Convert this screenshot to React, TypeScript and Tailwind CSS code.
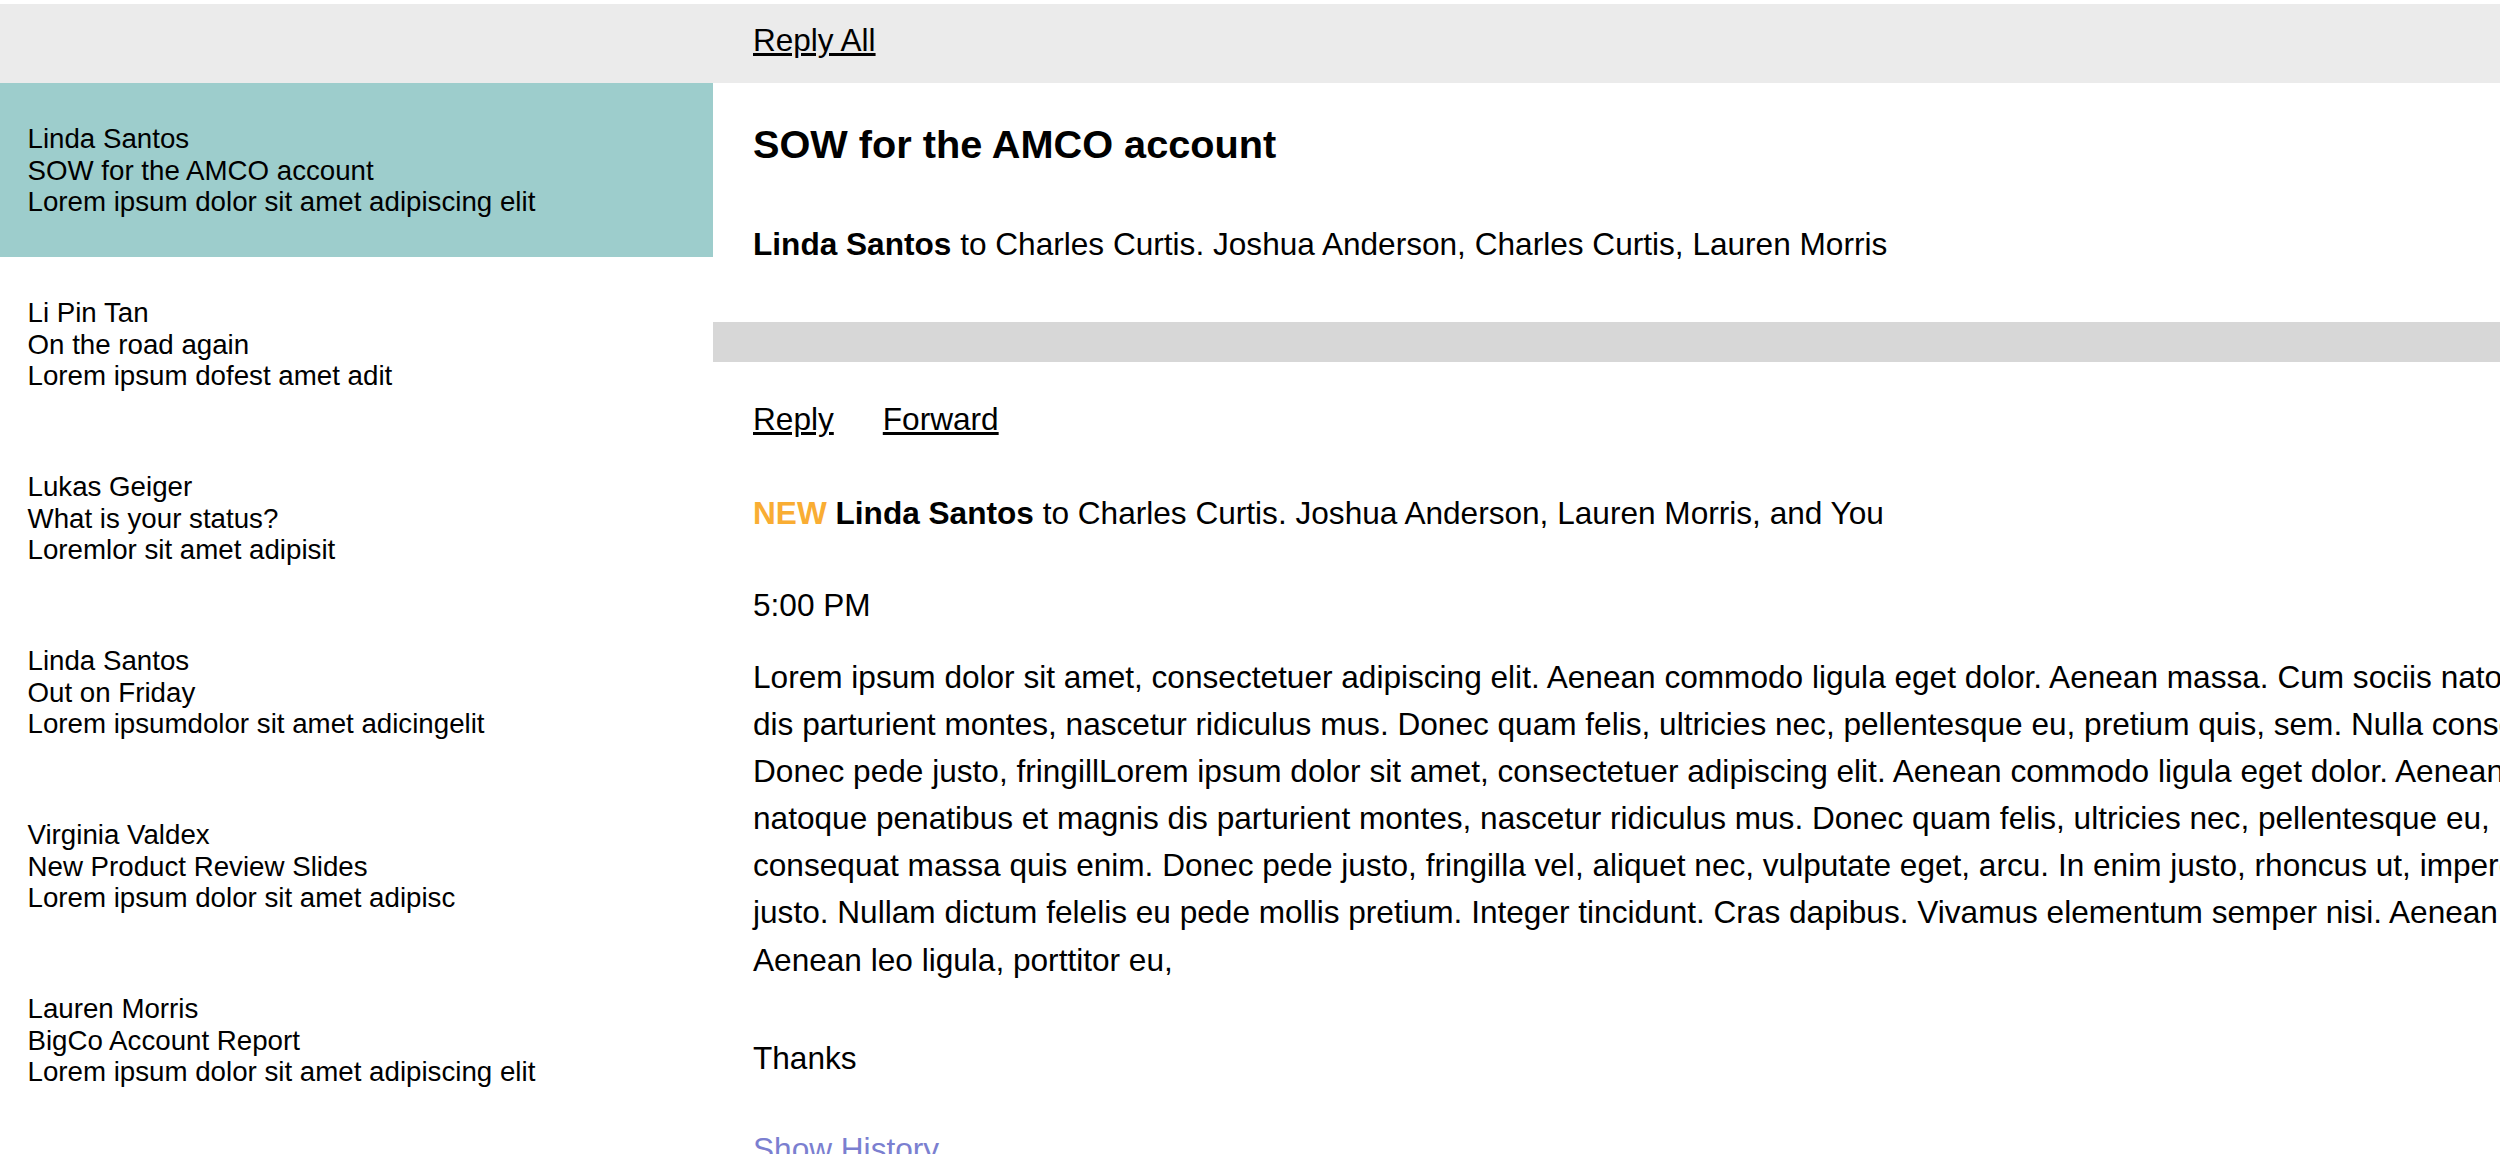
import React from "react";

const threads = [
  { from: "Linda Santos", subject: "SOW for the AMCO account", preview: "Lorem ipsum dolor sit amet adipiscing elit", active: true },
  { from: "Li Pin Tan", subject: "On the road again", preview: "Lorem ipsum dofest amet adit" },
  { from: "Lukas Geiger", subject: "What is your status?", preview: "Loremlor sit amet adipisit" },
  { from: "Linda Santos", subject: "Out on Friday", preview: "Lorem ipsumdolor sit amet adicingelit" },
  { from: "Virginia Valdex", subject: "New Product Review Slides", preview: "Lorem ipsum dolor sit amet adipisc" },
  { from: "Lauren Morris", subject: "BigCo Account Report", preview: "Lorem ipsum dolor sit amet adipiscing elit" },
];

const bodyLines = [
  "Lorem ipsum dolor sit amet, consectetuer adipiscing elit. Aenean commodo ligula eget dolor. Aenean massa. Cum sociis natoque penatibus et magnis",
  "dis parturient montes, nascetur ridiculus mus. Donec quam felis, ultricies nec, pellentesque eu, pretium quis, sem. Nulla consequat massa quis enim.",
  "Donec pede justo, fringillLorem ipsum dolor sit amet, consectetuer adipiscing elit. Aenean commodo ligula eget dolor. Aenean massa. Cum sociis",
  "natoque penatibus et magnis dis parturient montes, nascetur ridiculus mus. Donec quam felis, ultricies nec, pellentesque eu, pretium quis, sem. Nulla",
  "consequat massa quis enim. Donec pede justo, fringilla vel, aliquet nec, vulputate eget, arcu. In enim justo, rhoncus ut, imperdiet a, venenatis vitae,",
  "justo. Nullam dictum felelis eu pede mollis pretium. Integer tincidunt. Cras dapibus. Vivamus elementum semper nisi. Aenean vulputate eleifend tellus.",
  "Aenean leo ligula, porttitor eu,",
];

export default function App() {
  return (
    <div className="h-screen w-full overflow-hidden bg-white pt-[4px] text-black font-['Liberation_Sans',Arial,Helvetica,sans-serif]">
      <div className="flex h-[79px] bg-[#ebebeb]">
        <div className="w-[713px] shrink-0" />
        <div className="px-[40px] pt-[18px]">
          <a className="cursor-pointer text-[31.5px] leading-[36px] underline">Reply All</a>
        </div>
      </div>

      <div className="flex">
        <aside className="w-[713px] shrink-0">
          {threads.map((t, i) => (
            <div
              key={i}
              className={`h-[174px] py-[40px] pl-[27.5px] text-[27.7px] leading-[31.5px] ${t.active ? "bg-[#9dcdcc]" : "bg-white"}`}
            >
              <div className="whitespace-nowrap">{t.from}</div>
              <div className="whitespace-nowrap">{t.subject}</div>
              <div className="whitespace-nowrap">{t.preview}</div>
            </div>
          ))}
        </aside>

        <main className="min-w-0 flex-1 overflow-hidden">
          <section className="px-[40px]">
            <h1 className="mt-[39px] whitespace-nowrap text-[39.7px] font-bold leading-[45px]">SOW for the AMCO account</h1>
            <p className="mt-[59px] whitespace-nowrap text-[31.6px] leading-[36px]">
              <span className="font-bold">Linda Santos</span> to Charles Curtis. Joshua Anderson, Charles Curtis, Lauren Morris
            </p>
          </section>

          <div className="mt-[60px] h-[40px] bg-[#d7d7d7]" />

          <section className="px-[40px] text-[31.6px] leading-[36px]">
            <div className="mt-[39px] flex gap-[49px]">
              <a className="cursor-pointer underline">Reply</a>
              <a className="cursor-pointer underline">Forward</a>
            </div>

            <p className="mt-[58px] whitespace-nowrap">
              <span className="font-bold text-[#f9ad33]">NEW</span> <span className="font-bold">Linda Santos</span> to Charles Curtis. Joshua Anderson, Lauren Morris, and You
            </p>

            <p className="mt-[56px] whitespace-nowrap">5:00 PM</p>

            <div className="mt-[31px] leading-[47.1px]">
              {bodyLines.map((l, i) => (
                <div key={i} className="whitespace-nowrap">{l}</div>
              ))}
            </div>

            <p className="mt-[56px]">Thanks</p>

            <a className="mt-[55px] block cursor-pointer text-[#7b7fd0]">Show History</a>
          </section>
        </main>
      </div>
    </div>
  );
}
